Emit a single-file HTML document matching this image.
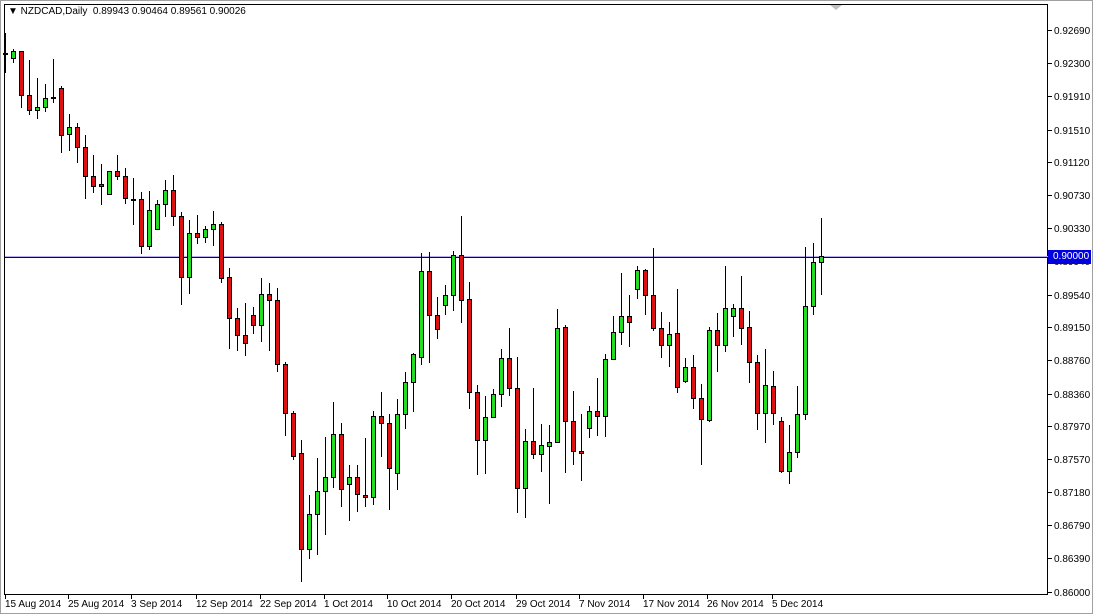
<!DOCTYPE html>
<html><head><meta charset="utf-8"><style>
html,body{margin:0;padding:0;background:#fff;}
body{width:1093px;height:615px;position:relative;overflow:hidden;font-family:"Liberation Sans",sans-serif;}
.t{position:absolute;font-size:10px;color:#000;white-space:nowrap;}
</style></head><body>
<svg id="s" width="1093" height="615" style="position:absolute;left:0;top:0" xmlns="http://www.w3.org/2000/svg">
<rect x="0" y="0" width="1093" height="615" fill="#fff"/>
<rect x="0.5" y="0.5" width="1092" height="613" fill="none" stroke="#a0a0a0"/>
<rect x="4.5" y="4.5" width="1043" height="590" fill="none" stroke="#000"/>
<polygon points="830,5 842,5 836,10" fill="#c0c0c0"/>
<line x1="5" y1="256.5" x2="1048" y2="256.5" stroke="#b8b0f0"/>
<line x1="5" y1="257.5" x2="1048" y2="257.5" stroke="#000080"/>
<g id="c"></g>
<g id="ticks" stroke="#000"></g>
</svg>
<div class="t" style="left:8px;top:6px;font-size:10px">&#9660; NZDCAD,Daily&nbsp; 0.89943 0.90464 0.89561 0.90026</div>
<div class="t" style="left:1054px;top:257px">0.89940</div>
<div class="t" style="left:1048px;top:250px;width:43px;height:14px;background:#0000e0;"></div>
<div id="p"></div>
<div id="d"></div>
<script>
var D=[[53,53,33,73],[58,51,49,63],[51,95,51,108],[95,110,60,115],[110,107,78,119],[107,98,84,112],[97,97,59,103],[88,135,86,153],[134,127,114,151],[127,147,123,163],[147,176,135,199],[176,186,155,193],[184,186,164,205],[194,171,171,194],[171,176,155,180],[176,198,168,204],[199,199,178,225],[199,246,192,254],[246,210,191,250],[229,204,200,229],[204,190,180,217],[190,216,175,226],[216,277,212,305],[277,233,220,294],[233,237,215,244],[237,229,226,243],[229,224,211,246],[224,278,222,283],[277,318,268,349],[318,335,308,351],[335,343,303,356],[315,325,307,334],[325,294,278,342],[294,300,283,351],[300,364,288,372],[364,413,362,436],[413,456,411,460],[453,549,440,582],[549,514,495,559],[514,491,458,555],[491,477,437,535],[477,434,402,488],[434,489,423,507],[484,477,465,521],[477,494,465,512],[495,497,438,507],[497,416,411,505],[416,423,392,457],[423,468,414,510],[473,414,399,490],[414,382,372,429],[382,354,353,412],[357,271,253,365],[271,315,252,363],[315,329,297,339],[305,295,285,315],[295,255,251,311],[255,300,216,323],[299,392,282,409],[392,440,385,475],[440,417,396,474],[417,394,389,418],[394,358,349,407],[358,388,328,396],[388,488,357,513],[488,441,429,518],[441,454,388,459],[454,445,424,472],[446,442,425,504],[442,328,309,443],[327,421,325,473],[421,451,391,465],[451,453,414,481],[428,411,406,438],[411,416,378,436],[416,359,354,437],[359,332,316,359],[332,316,273,345],[316,322,295,347],[289,270,266,299],[270,295,269,315],[295,328,248,331],[328,345,312,358],[345,334,322,367],[333,387,289,393],[381,367,358,383],[367,398,355,409],[398,419,384,465],[420,330,327,422],[330,345,313,372],[345,308,266,352],[316,308,304,337],[308,328,276,345],[327,362,311,383],[362,413,355,430],[413,385,349,443],[386,413,371,425],[421,471,417,473],[471,452,425,484],[452,414,386,458],[414,306,247,420],[306,262,243,315],[262,256,218,295]];
var g=document.getElementById("c"),h="";
D.forEach(function(c,i){var x=5+8*i,o=c[0],cl=c[1],top=Math.min(o,cl),bot=Math.max(o,cl);
h+='<line x1="'+(x+.5)+'" x2="'+(x+.5)+'" y1="'+c[2]+'" y2="'+c[3]+'" stroke="#000"/>';
if(bot-top<2){h+='<rect x="'+(x-2)+'" y="'+top+'" width="5" height="2" fill="#000"/>';}
else{var f=cl<o?"#22dd22":"#dd1111";h+='<rect x="'+(x-1.5)+'" y="'+(top+.5)+'" width="4" height="'+(bot-top)+'" fill="'+f+'" stroke="#000"/>';}});
g.innerHTML=h;
var P=[["0.92690",30],["0.92300",63],["0.91910",96],["0.91510",130],["0.91120",162],["0.90730",195],["0.90330",228],["0.89540",295],["0.89150",327],["0.88760",360],["0.88360",394],["0.87970",426],["0.87570",459],["0.87180",492],["0.86790",525],["0.86390",558],["0.86000",592]];
var ph="",th="";
P.forEach(function(p){ph+='<div class="t" style="left:1054px;top:'+(p[1]-4)+'px">'+p[0]+'</div>';th+='<line x1="1048" x2="1052" y1="'+(p[1]+.5)+'" y2="'+(p[1]+.5)+'"/>';});
ph+='<div class="t" style="left:1053px;top:251px;color:#fff">0.90000</div>';
document.getElementById("p").innerHTML=ph;
var Dt=[["15 Aug 2014",5],["25 Aug 2014",68],["3 Sep 2014",131],["12 Sep 2014",196],["22 Sep 2014",260],["1 Oct 2014",324],["10 Oct 2014",387],["20 Oct 2014",451],["29 Oct 2014",516],["7 Nov 2014",579],["17 Nov 2014",643],["26 Nov 2014",707],["5 Dec 2014",772]];
var dh="";
Dt.forEach(function(d){dh+='<div class="t" style="left:'+d[1]+'px;top:599px">'+d[0]+'</div>';th+='<line x1="'+(d[1]+.5)+'" x2="'+(d[1]+.5)+'" y1="595" y2="599"/>';});
document.getElementById("d").innerHTML=dh;
document.getElementById("ticks").innerHTML=th;
</script>
</body></html>
